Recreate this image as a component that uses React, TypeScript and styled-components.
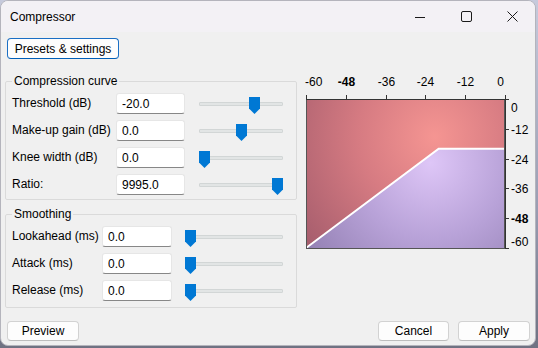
import React from "react";
import styled, { createGlobalStyle } from "styled-components";

const GlobalStyle = createGlobalStyle`
  html, body { margin: 0; padding: 0; }
  body {
    width: 538px;
    height: 348px;
    overflow: hidden;
    background: linear-gradient(180deg, #c6cadc 0%, #9a9db2 60%, #6f7282 100%);
    font-family: "Liberation Sans", Arial, sans-serif;
    font-size: 12px;
    color: #000;
  }
  * { box-sizing: border-box; }
`;

const Window = styled.div`
  width: 536px;
  height: 346px;
  border: 1px solid #b4b4bc;
  border-radius: 8px;
  overflow: hidden;
  background: #f0f0f0;
  display: flex;
  flex-direction: column;
`;

const TitleBar = styled.div`
  height: 31px;
  flex: none;
  display: flex;
  align-items: center;
  background: #f3f1f5;
  padding-left: 9px;
`;

const Title = styled.div`
  flex: 1;
  font-size: 12px;
  line-height: 14px;
`;

const Controls = styled.div`
  display: flex;
  height: 100%;
`;

const ControlButton = styled.div`
  width: 46px;
  height: 100%;
  display: flex;
  align-items: center;
  justify-content: center;
`;

const Body = styled.div`
  flex: 1;
  display: flex;
  flex-direction: column;
  padding: 6px 5px 4px 4px;
`;

const Button = styled.button<{ $primary?: boolean; $w: number }>`
  width: ${(p) => p.$w}px;
  height: ${(p) => (p.$primary ? 21 : 20)}px;
  padding: 0;
  margin: 0;
  background: #fdfdfd;
  border: 1px solid ${(p) => (p.$primary ? "#1a6fc4" : "#d2d2d2")};
  border-bottom-color: ${(p) => (p.$primary ? "#005fb8" : "#bdbdbd")};
  border-radius: 4px;
  font-family: "Liberation Sans", Arial, sans-serif;
  font-size: 12px;
  color: #000;
  line-height: 14px;
`;

const Toolbar = styled.div`
  display: flex;
  padding-left: 2px;
`;

const Main = styled.div`
  display: flex;
  margin-top: 15px;
`;

const LeftColumn = styled.div`
  width: 294px;
  display: flex;
  flex-direction: column;
  gap: 7px;
`;

const Group = styled.fieldset<{ $pt: number; $pb: number }>`
  margin: 0;
  min-inline-size: 0;
  border: 1px solid #dadada;
  border-radius: 2px;
  padding: ${(p) => p.$pt}px 13px ${(p) => p.$pb}px 6px;
  display: flex;
  flex-direction: column;
  gap: 6px;
`;

const Legend = styled.legend`
  padding: 0 2px;
  font-size: 12px;
  line-height: 14px;
`;

const Row = styled.div`
  display: flex;
  align-items: flex-start;
  height: 21px;
`;

const Label = styled.div<{ $w: number }>`
  width: ${(p) => p.$w}px;
  flex: none;
  line-height: 21px;
  white-space: nowrap;
`;

const Field = styled.input<{ $w: number }>`
  width: ${(p) => p.$w}px;
  height: 21px;
  flex: none;
  margin: 0;
  padding: 0 5px;
  background: #fff;
  border: 1px solid #e6e6e6;
  border-bottom: 1px solid #878787;
  border-radius: 3px;
  font-family: "Liberation Sans", Arial, sans-serif;
  font-size: 12px;
  color: #000;
  outline: none;
`;

const SliderBox = styled.div<{ $w: number; $gap: number }>`
  position: relative;
  width: ${(p) => p.$w}px;
  height: 21px;
  margin-left: ${(p) => p.$gap}px;
  padding-top: 9px;
  flex: none;
`;

const Track = styled.div`
  height: 4px;
  background: #e2e5e5;
  border: 1px solid #d2d6d6;
  border-radius: 1px;
`;

const Thumb = styled.div`
  position: absolute;
  top: 4px;
  width: 11px;
  height: 17px;
  background: #0078d4;
  clip-path: polygon(0 0, 100% 0, 100% 68%, 50% 100%, 0 68%);
`;

const Footer = styled.div`
  display: flex;
  align-items: center;
  margin-top: 13px;
  padding-left: 2px;
  gap: 9px;
`;

const Spacer = styled.div`
  flex: 1;
`;

const Graph = styled.svg`
  display: block;
  flex: none;
`;

const GraphText = styled.text<{ $bold?: boolean }>`
  font-family: "Liberation Sans", Arial, sans-serif;
  font-size: 12px;
  font-weight: ${(p) => (p.$bold ? 700 : 400)};
  fill: #000;
`;

type SliderProps = { width: number; gap: number; frac: number };
function Slider({ width, gap, frac }: SliderProps) {
  const left = Math.round(frac * (width - 11));
  return (
    <SliderBox $w={width} $gap={gap}>
      <Track />
      <Thumb style={{ left }} />
    </SliderBox>
  );
}

type Param = { label: string; value: string; frac: number };

const curveParams: Param[] = [
  { label: "Threshold (dB)", value: "-20.0", frac: 0.69 },
  { label: "Make-up gain (dB)", value: "0.0", frac: 0.51 },
  { label: "Knee width (dB)", value: "0.0", frac: 0 },
  { label: "Ratio:", value: "9995.0", frac: 1 },
];

const smoothParams: Param[] = [
  { label: "Lookahead (ms)", value: "0.0", frac: 0 },
  { label: "Attack (ms)", value: "0.0", frac: 0 },
  { label: "Release (ms)", value: "0.0", frac: 0 },
];

function CurveGraph() {
  const L = 9;
  const R = 208;
  const T = 25;
  const B = 174;
  const W = R - L;
  const H = B - T;
  const kx = L + (W * 40) / 60;
  const ky = T + (H * 20) / 60;
  const labels = ["-60", "-48", "-36", "-24", "-12", "0"];
  const rightLabels = ["0", "-12", "-24", "-36", "-48", "-60"];
  return (
    <Graph width={237} height={182} viewBox="0 0 237 182">
      <defs>
        <radialGradient id="redG" gradientUnits="userSpaceOnUse" cx={kx - 4} cy={ky - 12} r={170}>
          <stop offset="0" stopColor="#f59592" />
          <stop offset="0.45" stopColor="#d67b82" />
          <stop offset="1" stopColor="#a45c6c" />
        </radialGradient>
        <radialGradient id="purG" gradientUnits="userSpaceOnUse" cx={kx - 8} cy={ky + 14} r={170}>
          <stop offset="0" stopColor="#dec6f7" />
          <stop offset="0.45" stopColor="#b8a2d8" />
          <stop offset="1" stopColor="#8a78aa" />
        </radialGradient>
      </defs>
      <path d={`M${L},${T} H${R} V${ky} H${kx} L${L},${B} Z`} fill="url(#redG)" />
      <path d={`M${L},${B} L${kx},${ky} H${R} V${B} Z`} fill="url(#purG)" />
      <path d={`M${L},${B} L${kx},${ky} H${R}`} fill="none" stroke="#fff" strokeWidth={2} />
      <rect x={L + 0.5} y={T + 0.5} width={W - 1} height={H} fill="none" stroke="#555" strokeWidth={1} />
      <line x1={L} y1={T + 0.5} x2={R + 4} y2={T + 0.5} stroke="#333" strokeWidth={1} />
      <line x1={R + 0.5} y1={T} x2={R + 0.5} y2={B + 0.5} stroke="#333" strokeWidth={1} />
      {labels.map((t, i) => {
        const x = Math.round(L + (W * i) / 5) + 0.5;
        const anchor = i === 0 ? "start" : i === 5 ? "end" : "middle";
        return (
          <g key={"t" + i}>
            <line x1={x} y1={T - 4} x2={x} y2={T} stroke="#333" strokeWidth={1} />
            <GraphText x={i === 0 ? L - 1 : i === 5 ? R - 1 : x} y={12} textAnchor={anchor} $bold={t === "-48"}>
              {t}
            </GraphText>
          </g>
        );
      })}
      {rightLabels.map((t, i) => {
        const y = Math.round(T + (H * i) / 5) + 0.5;
        const by = i === 0 ? T + 13 : i === 5 ? B - 2 : y + 4;
        return (
          <g key={"r" + i}>
            <line x1={R} y1={y} x2={R + 4} y2={y} stroke="#333" strokeWidth={1} />
            <GraphText x={214} y={by} $bold={t === "-48"}>
              {t}
            </GraphText>
          </g>
        );
      })}
    </Graph>
  );
}

function ParamRows({ params, labelW, fieldW, sliderGap, sliderW }: { params: Param[]; labelW: number; fieldW: number; sliderGap: number; sliderW: number }) {
  return (
    <>
      {params.map((p) => (
        <Row key={p.label}>
          <Label $w={labelW}>{p.label}</Label>
          <Field $w={fieldW} defaultValue={p.value} readOnly />
          <Slider width={sliderW} gap={sliderGap} frac={p.frac} />
        </Row>
      ))}
    </>
  );
}

export default function App() {
  return (
    <>
      <GlobalStyle />
      <Window>
        <TitleBar>
          <Title>Compressor</Title>
          <Controls>
            <ControlButton>
              <svg width="10" height="10" viewBox="0 0 10 10">
                <line x1="0" y1="5.5" x2="10" y2="5.5" stroke="#1a1a1a" strokeWidth="1" />
              </svg>
            </ControlButton>
            <ControlButton>
              <svg width="11" height="11" viewBox="0 0 11 11">
                <rect x="0.5" y="0.5" width="10" height="10" rx="1.5" fill="none" stroke="#1a1a1a" strokeWidth="1" />
              </svg>
            </ControlButton>
            <ControlButton>
              <svg width="11" height="11" viewBox="0 0 11 11">
                <path d="M0.5 0.5 L10.5 10.5 M10.5 0.5 L0.5 10.5" stroke="#1a1a1a" strokeWidth="1" fill="none" />
              </svg>
            </ControlButton>
          </Controls>
        </TitleBar>
        <Body>
          <Toolbar>
            <Button $primary $w={112}>Presets &amp; settings</Button>
          </Toolbar>
          <Main>
            <LeftColumn>
              <Group $pt={5} $pb={4}>
                <Legend>Compression curve</Legend>
                <ParamRows params={curveParams} labelW={104} fieldW={69} sliderGap={14} sliderW={84} />
              </Group>
              <Group $pt={5} $pb={6}>
                <Legend>Smoothing</Legend>
                <ParamRows params={smoothParams} labelW={90} fieldW={70} sliderGap={13} sliderW={98} />
              </Group>
            </LeftColumn>
            <CurveGraph />
          </Main>
          <Footer>
            <Button $w={72}>Preview</Button>
            <Spacer />
            <Button $w={71}>Cancel</Button>
            <Button $w={72}>Apply</Button>
          </Footer>
        </Body>
      </Window>
    </>
  );
}
